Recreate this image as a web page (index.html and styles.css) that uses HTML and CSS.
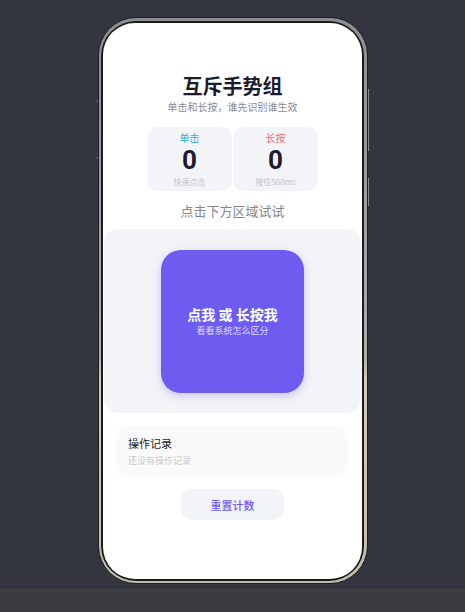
FILE: index.html
```html
<!DOCTYPE html>
<html lang="zh-CN">
<head>
<meta charset="utf-8">
<title>互斥手势组</title>
<link rel="stylesheet" href="styles.css">
</head>
<body>
<div class="stage">
  <div class="phone">
    <span class="btn btn-l1"></span>
    <span class="btn btn-l2"></span>
    <span class="btn btn-r1"></span>
    <span class="btn btn-r2"></span>
    <div class="bezel">
      <div class="screen">
        <h1 class="title">互斥手势组</h1>
        <p class="subtitle">单击和长按，谁先识别谁生效</p>
        <div class="stats">
          <div class="stat">
            <div class="stat-label tap">单击</div>
            <div class="stat-num">0</div>
            <div class="stat-sub">快速点击</div>
          </div>
          <div class="stat">
            <div class="stat-label press">长按</div>
            <div class="stat-num">0</div>
            <div class="stat-sub">按住500ms</div>
          </div>
        </div>
        <p class="hint">点击下方区域试试</p>
        <div class="area">
          <div class="pad">
            <div class="pad-main">点我 或 长按我</div>
            <div class="pad-sub">看看系统怎么区分</div>
          </div>
        </div>
        <div class="log">
          <div class="log-title">操作记录</div>
          <div class="log-empty">还没有操作记录</div>
        </div>
        <div class="reset">重置计数</div>
      </div>
    </div>
  </div>
</div>
<div class="footer"></div>
</body>
</html>
```
FILE: styles.css
```css
* { box-sizing: border-box; }
html, body { margin: 0; padding: 0; }
body {
  background: #33363e;
  font-family: "Noto Sans CJK SC", "Noto Sans", sans-serif;
  width: 465px;
  height: 612px;
  overflow: hidden;
}
.stage {
  height: 587px;
  display: flex;
  justify-content: center;
  padding-top: 17px;
}
.footer {
  height: 25px;
  background: #3a3c3f;
  border-top: 1px solid #2e3036;
}
.phone {
  position: relative;
  width: 270px;
  height: 567px;
  border-radius: 38px;
  padding: 2.5px;
  background: linear-gradient(180deg, #8e8e92 0%, #a8a8ac 50%, #b0aea8 60%, #d2cbbc 64%, #c4bcab 100%);
  border: 1px solid #1e1f22;
}
.bezel {
  height: 100%;
  border-radius: 35px;
  padding: 2px;
  background: #1a1b1d;
}
.screen {
  height: 100%;
  border-radius: 32px;
  background: #ffffff;
  overflow: hidden;
  display: flex;
  flex-direction: column;
  align-items: center;
  padding-top: 49.5px;
}
.btn {
  position: absolute;
  background: #6a6b70;
  width: 1px;
}
.btn-l1 { left: -2px; top: 82px; height: 2px; }
.btn-l2 { left: -2px; top: 139px; height: 2px; }
.btn-r1 { right: -2px; top: 71px; height: 62px; background: #8a8b90; }
.btn-r2 { right: -2px; top: 160px; height: 28px; background: #8a8b90; }

.title {
  margin: 0;
  font-size: 20px;
  line-height: 28px;
  font-weight: 700;
  color: #1d1c2c;
}
.subtitle {
  margin: 0;
  font-size: 10px;
  line-height: 14px;
  color: #8a8a90;
}
.stats {
  margin-top: 13px;
  display: flex;
  gap: 1px;
}
.stat {
  width: 85px;
  height: 64px;
  border-radius: 10px;
  background: #f3f4f8;
  display: flex;
  flex-direction: column;
  align-items: center;
  padding-top: 3px;
}
.stat-label {
  font-size: 10px;
  line-height: 15px;
}
.stat-label.tap { color: #27b2d4; }
.stat-label.press { color: #f26a6a; }
.stat-num {
  font-family: Roboto, "Noto Sans", sans-serif;
  font-size: 26px;
  line-height: 31px;
  font-weight: 700;
  color: #1d1c2c;
}
.stat-sub {
  font-size: 8px;
  line-height: 12px;
  color: #c2c2c6;
}
.hint {
  margin: 9.5px 0 0;
  font-size: 13px;
  line-height: 19px;
  color: #86868c;
}
.area {
  margin-top: 9.5px;
  align-self: stretch;
  margin-left: 1px;
  margin-right: 1px;
  height: 184px;
  border-radius: 14px;
  background: #f3f4f8;
  display: flex;
  justify-content: center;
  padding-top: 21px;
}
.pad {
  width: 143px;
  height: 143px;
  border-radius: 20px;
  background: #6d5cef;
  box-shadow: 0 3px 8px rgba(80, 60, 200, 0.25);
  display: flex;
  flex-direction: column;
  align-items: center;
  justify-content: center;
  color: #ffffff;
  padding-bottom: 1px;
}
.pad-main {
  font-size: 14px;
  line-height: 20px;
  font-weight: 700;
}
.pad-sub {
  font-size: 9px;
  line-height: 14px;
  color: rgba(255, 255, 255, 0.78);
}
.log {
  margin-top: 13px;
  align-self: stretch;
  margin-left: 13px;
  margin-right: 14px;
  height: 51px;
  border-radius: 10px;
  background: #fafafb;
  padding: 9px 12px;
}
.log-title {
  font-size: 11px;
  line-height: 16px;
  color: #1d1c2c;
}
.log-empty {
  margin-top: 3px;
  font-size: 9px;
  line-height: 14px;
  color: #c8c8cc;
}
.reset {
  margin-top: 12px;
  width: 103px;
  height: 31px;
  border-radius: 10px;
  background: #f3f4f8;
  color: #6d5cef;
  font-size: 11px;
  font-weight: 500;
  display: flex;
  align-items: center;
  justify-content: center;
}
```
